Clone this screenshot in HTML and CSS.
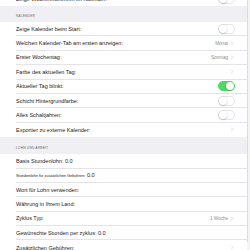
FILE: index.html
```html
<!DOCTYPE html>
<html lang="de">
  <head>
    <meta charset="UTF-8" />
    <title>Einstellungen</title>
    <link rel="stylesheet" href="styles.css">
  </head>
  <body>
    <div class="screen">
      <div class="table">
        <div class="group scrolled">
          <div class="row">
            <span class="label">Zeige Wochennummern im Kalender:</span>
            <span class="switch"></span>
          </div>
        </div>

        <div class="section-head first">KALENDER</div>
        <div class="group">
          <div class="row">
            <span class="label">Zeige Kalender beim Start:</span>
            <span class="switch"></span>
          </div>
          <div class="row">
            <span class="label">Welchen Kalender-Tab am ersten anzeigen:</span>
            <span class="value">Monat</span>
            <svg class="chevron" viewBox="0 0 4 6"><polyline points="1,0.8 3,3 1,5.2" /></svg>
          </div>
          <div class="row">
            <span class="label">Erster Wochentag:</span>
            <span class="value">Sonntag</span>
            <svg class="chevron" viewBox="0 0 4 6"><polyline points="1,0.8 3,3 1,5.2" /></svg>
          </div>
          <div class="row">
            <span class="label">Farbe des aktuellen Tag:</span>
            <svg class="chevron" viewBox="0 0 4 6"><polyline points="1,0.8 3,3 1,5.2" /></svg>
          </div>
          <div class="row">
            <span class="label">Aktueller Tag blinkt:</span>
            <span class="switch on"></span>
          </div>
          <div class="row">
            <span class="label">Schicht Hintergrundfarbe:</span>
            <span class="switch"></span>
          </div>
          <div class="row">
            <span class="label">Alles Schaltjahren:</span>
            <span class="switch"></span>
          </div>
          <div class="row">
            <span class="label">Exportier zu externe Kalender:</span>
            <svg class="chevron" viewBox="0 0 4 6"><polyline points="1,0.8 3,3 1,5.2" /></svg>
          </div>
        </div>

        <div class="section-head">LOHN UND ARBEIT</div>
        <div class="group">
          <div class="row">
            <span class="label">Basis Stundenlohn: 0.0</span>
          </div>
          <div class="row">
            <span class="label"><span class="small">Stundenlohn für zusätzlichen Gebühren:</span> 0.0</span>
          </div>
          <div class="row">
            <span class="label">Wort für Lohn verwenden:</span>
          </div>
          <div class="row">
            <span class="label">Währung in Ihrem Land:</span>
          </div>
          <div class="row">
            <span class="label">Zyklus Typ:</span>
            <span class="value">1 Woche</span>
            <svg class="chevron" viewBox="0 0 4 6"><polyline points="1,0.8 3,3 1,5.2" /></svg>
          </div>
          <div class="row">
            <span class="label">Gewünschte Stunden per zyklus: 0.0</span>
          </div>
          <div class="row">
            <span class="label">Zusätzlichen Gebühren:</span>
            <svg class="chevron" viewBox="0 0 4 6"><polyline points="1,0.8 3,3 1,5.2" /></svg>
          </div>
        </div>
      </div>
    </div>
  </body>
</html>
```

FILE: styles.css
```css
body {
  margin: 0;
  padding: 0;
  font-family: "Liberation Sans", Arial, sans-serif;
  background: #f4f4f6;
  overflow: hidden;
}

.screen {
  width: 250px;
  height: 250px;
  overflow: hidden;
}

.table {
  width: 247px;
  height: 250px;
  background: #efeff4;
  border-right: 1px solid #dcdce0;
}

.group {
  background: #fff;
}

/* list is scrolled, last row of the previous section is cut off */
.scrolled {
  margin-top: -8px;
}

.row {
  display: flex;
  align-items: center;
  height: 14.4px;
  box-sizing: border-box;
  margin-left: 16px;
  padding-right: 12px;
  border-bottom: 1px solid #e4e4e8;
}

.row:last-child {
  border-bottom: none;
}

.label {
  flex: 1;
  font-size: 5.5px;
  color: #222;
  white-space: nowrap;
}

.small {
  font-size: 3.9px;
}

.value {
  font-size: 4.6px;
  color: #8e8e93;
  margin-right: 2px;
}

.chevron {
  width: 4px;
  height: 5px;
  margin-right: 1px;
}

.chevron polyline {
  fill: none;
  stroke: #c7c7cc;
  stroke-width: 0.8;
}

.section-head {
  height: 17px;
  box-sizing: border-box;
  padding: 0 0 4.5px 16px;
  display: flex;
  align-items: flex-end;
  font-size: 3.4px;
  color: #6d6d72;
  letter-spacing: 0.1px;
}

.section-head.first {
  height: 15.6px;
  padding-bottom: 4px;
}

.switch {
  position: relative;
  width: 17px;
  height: 10px;
  box-sizing: border-box;
  border-radius: 5px;
  border: 1px solid #e3e3e8;
  background: #fff;
}

.switch::after {
  content: "";
  position: absolute;
  top: 0;
  left: 0;
  width: 8px;
  height: 8px;
  border-radius: 50%;
  background: #fff;
  box-shadow: 0 0.5px 1.5px rgba(0, 0, 0, 0.3);
}

.switch.on {
  background: #4cd964;
  border-color: #4cd964;
}

.switch.on::after {
  left: 7px;
}
```
